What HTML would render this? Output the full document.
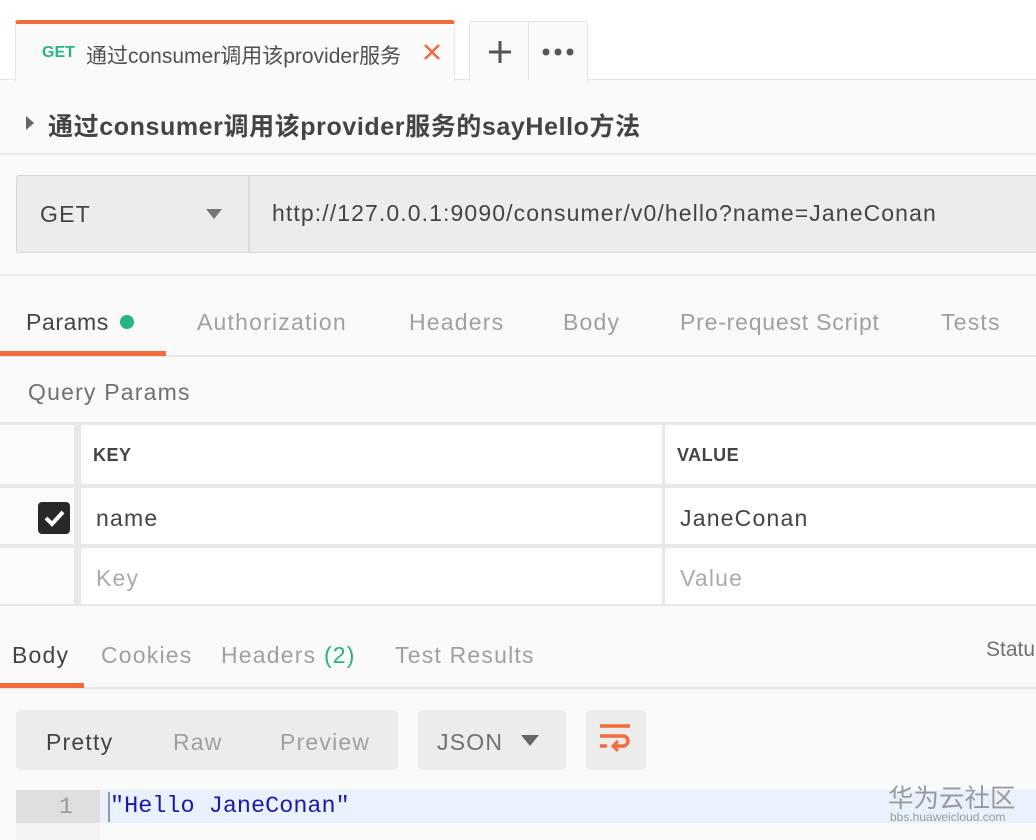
<!DOCTYPE html>
<html><head><meta charset="utf-8"><style>
*{margin:0;padding:0;box-sizing:border-box}
body{width:1036px;height:840px;overflow:hidden;background:#fafafa;font-family:"Liberation Sans","Noto Sans CJK SC",sans-serif;color:#505050;position:relative}
.a{position:absolute}
.t{position:absolute;white-space:nowrap}
.m{font-size:23px;letter-spacing:1.2px}
</style></head><body>
<div class="a" style="left:0;top:0;width:1036px;height:80px;background:#fff;border-bottom:1px solid #e6e6e6"></div>
<div class="a" style="left:15px;top:20px;width:440px;height:61px;background:#fafafa;border-top:4px solid #f26b3a;border-radius:3px 3px 0 0;border-left:1px solid #e6e6e6;border-right:1px solid #e6e6e6"></div>
<div class="t" style="left:42px;top:44px;font-size:16px;font-weight:bold;color:#26b47f">GET</div>
<div class="t" style="left:86px;top:40px;font-size:21px;color:#505050;width:324px;overflow:hidden">通过consumer调用该provider服务</div>
<svg class="a" style="left:422px;top:42px" width="20" height="20"><path d="M3 3L17 17M17 3L3 17" stroke="#f26b3a" stroke-width="2.5"/></svg>
<div class="a" style="left:469px;top:21px;width:119px;height:60px;background:#fafafa;border:1px solid #e3e3e3;border-bottom:none;border-radius:3px 3px 0 0"></div>
<div class="a" style="left:528px;top:22px;width:1px;height:58px;background:#e3e3e3"></div>
<svg class="a" style="left:486px;top:38px" width="28" height="28"><path d="M14 3V25M3 14H25" stroke="#555" stroke-width="3"/></svg>
<svg class="a" style="left:540px;top:46px" width="36" height="12"><circle cx="6" cy="6" r="3.5" fill="#555"/><circle cx="18" cy="6" r="3.5" fill="#555"/><circle cx="30" cy="6" r="3.5" fill="#555"/></svg>
<div class="a" style="left:0;top:153px;width:1036px;height:2px;background:#ececec"></div>
<svg class="a" style="left:25px;top:115px" width="10" height="16"><path d="M1 1L9 8L1 15Z" fill="#666"/></svg>
<div class="t" style="left:48px;top:107px;font-size:25px;letter-spacing:0.6px;font-weight:bold;color:#444">通过consumer调用该provider服务的sayHello方法</div>
<div class="a" style="left:16px;top:175px;width:1030px;height:78px;background:#ececec;border:1px solid #d6d6d6;border-radius:3px"></div>
<div class="a" style="left:248px;top:176px;width:2px;height:76px;background:#dcdcdc"></div>
<div class="t m" style="left:40px;top:201px;color:#444">GET</div>
<svg class="a" style="left:206px;top:209px" width="16" height="12"><path d="M0 0H16L8 10Z" fill="#777"/></svg>
<div class="t" style="left:272px;top:200px;font-size:23px;letter-spacing:1.1px;color:#444">http://127.0.0.1:9090/consumer/v0/hello?name=JaneConan</div>
<div class="a" style="left:0;top:274px;width:1036px;height:2px;background:#ececec"></div>
<div class="t m" style="left:26px;top:309px;color:#444;letter-spacing:0.6px">Params</div>
<div class="a" style="left:120px;top:315px;width:14px;height:14px;border-radius:50%;background:#26b47f"></div>
<div class="t m" style="left:197px;top:309px;color:#a0a0a0">Authorization</div>
<div class="t m" style="left:409px;top:309px;color:#a0a0a0">Headers</div>
<div class="t m" style="left:563px;top:309px;color:#a0a0a0">Body</div>
<div class="t m" style="left:680px;top:309px;color:#a0a0a0;letter-spacing:0.8px">Pre-request Script</div>
<div class="t m" style="left:941px;top:309px;color:#a0a0a0">Tests</div>
<div class="a" style="left:0;top:355px;width:1036px;height:2px;background:#e6e6e6"></div>
<div class="a" style="left:0;top:351px;width:166px;height:5px;background:#f26b3a"></div>
<div class="t m" style="left:28px;top:379px;color:#707070">Query Params</div>
<div class="a" style="left:0;top:422px;width:1036px;height:184px;background:#e8e8e8"></div>
<div class="a" style="left:0;top:425px;width:74px;height:59px;background:#fbfbfb"></div>
<div class="a" style="left:81px;top:425px;width:581px;height:59px;background:#fff"></div>
<div class="a" style="left:665px;top:425px;width:371px;height:59px;background:#fff"></div>
<div class="a" style="left:0;top:488px;width:74px;height:56px;background:#fbfbfb"></div>
<div class="a" style="left:81px;top:488px;width:581px;height:56px;background:#fff"></div>
<div class="a" style="left:665px;top:488px;width:371px;height:56px;background:#fff"></div>
<div class="a" style="left:0;top:548px;width:74px;height:56px;background:#fbfbfb"></div>
<div class="a" style="left:81px;top:548px;width:581px;height:56px;background:#fff"></div>
<div class="a" style="left:665px;top:548px;width:371px;height:56px;background:#fff"></div>
<div class="t" style="left:93px;top:445px;font-size:18px;letter-spacing:0.5px;font-weight:bold;color:#444">KEY</div>
<div class="t" style="left:677px;top:445px;font-size:18px;letter-spacing:0.5px;font-weight:bold;color:#444">VALUE</div>
<div class="a" style="left:38px;top:502px;width:32px;height:32px;border-radius:4px;background:#282828"></div>
<svg class="a" style="left:38px;top:502px" width="32" height="32"><path d="M8 16L14 22L25 10" stroke="#fff" stroke-width="4" fill="none"/></svg>
<div class="t m" style="left:96px;top:505px;color:#444">name</div>
<div class="t m" style="left:680px;top:505px;color:#444">JaneConan</div>
<div class="t m" style="left:96px;top:565px;color:#aaa">Key</div>
<div class="t m" style="left:680px;top:565px;color:#aaa">Value</div>
<div class="t m" style="left:12px;top:642px;color:#444">Body</div>
<div class="t m" style="left:101px;top:642px;color:#a0a0a0">Cookies</div>
<div class="t m" style="left:221px;top:642px;color:#a0a0a0">Headers <span style="color:#26b47f">(2)</span></div>
<div class="t m" style="left:395px;top:642px;color:#a0a0a0">Test Results</div>
<div class="t" style="left:986px;top:638px;font-size:21px;color:#707070">Status</div>
<div class="a" style="left:0;top:687px;width:1036px;height:2px;background:#e6e6e6"></div>
<div class="a" style="left:0;top:683px;width:84px;height:5px;background:#f26b3a"></div>
<div class="a" style="left:16px;top:710px;width:382px;height:60px;background:#ececec;border-radius:4px"></div>
<div class="t m" style="left:46px;top:729px;color:#444">Pretty</div>
<div class="t m" style="left:173px;top:729px;color:#a0a0a0">Raw</div>
<div class="t m" style="left:280px;top:729px;color:#a0a0a0">Preview</div>
<div class="a" style="left:418px;top:710px;width:148px;height:60px;background:#ececec;border-radius:4px"></div>
<div class="t m" style="left:437px;top:729px;color:#707070">JSON</div>
<svg class="a" style="left:521px;top:735px" width="18" height="12"><path d="M0 0H18L9 11Z" fill="#666"/></svg>
<div class="a" style="left:586px;top:710px;width:60px;height:60px;background:#ececec;border-radius:4px"></div>
<svg class="a" style="left:598px;top:722px" width="36" height="36"><path d="M2 4H32M2 14H25a5 5 0 0 1 0 10H17M2 24H9" stroke="#f26b3a" stroke-width="3.5" fill="none"/><path d="M20 19L15 24L20 29" stroke="#f26b3a" stroke-width="3" fill="none"/></svg>
<div class="a" style="left:16px;top:790px;width:84px;height:50px;background:#f3f3f3"></div>
<div class="a" style="left:16px;top:790px;width:84px;height:33px;background:#dedede"></div>
<div class="a" style="left:100px;top:790px;width:936px;height:33px;background:#e8f1fc"></div>
<div class="a" style="left:108px;top:792px;width:2px;height:30px;background:#999"></div>
<div class="t" style="left:59px;top:794px;font-size:23px;color:#999;font-family:'Liberation Mono',monospace">1</div>
<div class="t" style="left:110px;top:793px;font-size:23.5px;color:#1a1aa6;font-family:'Liberation Mono',monospace">"Hello JaneConan"</div>
<div class="t" style="left:888px;top:778px;font-size:25.5px;color:#9a9a9a">华为云社区</div>
<div class="t" style="left:890px;top:810px;font-size:12px;color:#9a9a9a">bbs.huaweicloud.com</div>
</body></html>
